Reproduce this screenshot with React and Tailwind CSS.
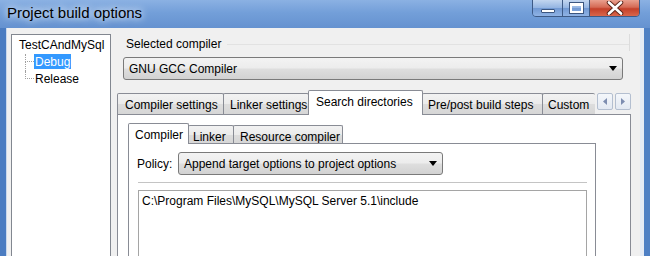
import React from 'react';

const Combo = ({ text, className }) => (
  <div className={`flex shrink-0 items-center h-[23px] border border-[#7a7a7a] rounded-[3px] bg-[linear-gradient(180deg,#f3f3f3_0%,#ececec_48%,#dedede_52%,#d2d2d2_100%)] pl-[5px] pr-[5px] ${className}`}>
    <span className="flex-1 text-[12px] leading-[14px] text-black whitespace-nowrap">{text}</span>
    <svg width="8" height="5" viewBox="0 0 8 5">
      <path d="M0 0h8L4 5z" fill="#000" />
    </svg>
  </div>
);

const Tab = ({ label, active, className }) =>
  active ? (
    <div className={`flex shrink-0 items-start pt-[4px] bg-white border border-b-0 border-[#898c95] rounded-t-[2px] -mb-px relative z-10 text-[12px] leading-[14px] text-black whitespace-nowrap ${className}`}>
      {label}
    </div>
  ) : (
    <div className={`flex shrink-0 items-start pt-[4px] bg-[linear-gradient(180deg,#f2f2f2_0%,#ebebeb_50%,#dddddd_51%,#d6d6d6_100%)] border border-b-0 border-[#898c95] rounded-t-[2px] text-[12px] leading-[14px] text-black whitespace-nowrap overflow-hidden ${className}`}>
      {label}
    </div>
  );

const ScrollBtn = ({ dir }) => (
  <div className="w-[16px] h-[17px] flex items-center justify-center border border-[#b4bfd0] rounded-[2px] bg-[linear-gradient(180deg,#f4f7fb_0%,#e3e9f2_100%)]">
    <svg width="4" height="7" viewBox="0 0 4 7">
      {dir === 'left' ? <path d="M4 0v7L0 3.5z" fill="#7d8db0" /> : <path d="M0 0v7l4-3.5z" fill="#7d8db0" />}
    </svg>
  </div>
);

const App = () => {
  return (
    <div className="w-[650px] h-[256px] overflow-hidden flex flex-col bg-[#5d8bcb] font-['Liberation_Sans',Arial,sans-serif]">
      {/* Title bar */}
      <div className="h-[28px] shrink-0 flex items-start bg-[linear-gradient(180deg,#8bb1e3_0%,#739fd9_45%,#6592d0_100%)]">
        <div className="pl-[7px] pt-[5px] text-[15px] leading-[16px] text-black [text-shadow:0_0_6px_#dce9f8,0_0_10px_#dce9f8]">
          Project build options
        </div>
        <div className="ml-auto mr-[10px] flex h-[18px] -mt-px border border-[#3d5a86] rounded-b-[4px] overflow-hidden">
          <div className="w-[30px] flex items-center justify-center bg-[linear-gradient(180deg,#c2d6f0_0%,#93b4e2_50%,#7199d3_51%,#8fb3e5_100%)] border-r border-[#3d5a86]">
            <div className="mt-[6px] w-[14px] h-[4px] bg-white border border-[#3b5680] rounded-[1px]" />
          </div>
          <div className="w-[27px] flex items-center justify-center bg-[linear-gradient(180deg,#c2d6f0_0%,#93b4e2_50%,#7199d3_51%,#8fb3e5_100%)] border-r border-[#3d5a86]">
            <div className="w-[13px] h-[10px] border-2 border-t-[3px] border-white outline outline-1 outline-[#3b5680]" />
          </div>
          <div className="w-[49px] flex items-center justify-center bg-[linear-gradient(180deg,#e9a08f_0%,#d56a55_45%,#c4402a_55%,#d9664b_100%)]">
            <svg width="18" height="14" viewBox="0 0 18 14">
              <path d="M3 1.5l12 11M15 1.5l-12 11" stroke="#5a2418" strokeWidth="4.5" strokeLinecap="round" />
              <path d="M3 1.5l12 11M15 1.5l-12 11" stroke="#fff" strokeWidth="2.6" strokeLinecap="round" />
            </svg>
          </div>
        </div>
      </div>

      {/* Frame + client */}
      <div className="flex flex-1 min-h-0 overflow-hidden">
        <div className="w-[7px] shrink-0 bg-[#4b7cc1] border-r border-[#c9d8ec]" />
        <div className="w-[633px] shrink-0 bg-[#f0f0f0] flex items-start pl-[4px] pt-[6px]">
          {/* Tree */}
          <div className="w-[100px] h-[240px] shrink-0 bg-white border border-[#828790] pl-[7px] pt-[3px] text-[12px] leading-[14px] text-black">
            <div className="h-[16px] whitespace-nowrap">TestCAndMySql</div>
            <div className="flex h-[17px] ml-[6px]">
              <div className="w-[9px] flex flex-col">
                <div className="h-[8px] border-l border-b border-dotted border-[#a0a0a0]" />
                <div className="flex-1 border-l border-dotted border-[#a0a0a0]" />
              </div>
              <div className="px-[1px] h-[15px] bg-[#3399ff] text-white flex items-center">Debug</div>
            </div>
            <div className="flex h-[17px] ml-[6px]">
              <div className="w-[9px] flex flex-col">
                <div className="h-[8px] border-l border-b border-dotted border-[#a0a0a0]" />
              </div>
              <div className="px-[1px] h-[15px] flex items-center">Release</div>
            </div>
          </div>

          {/* Right side */}
          <div className="ml-[6px] w-[514px] shrink-0 flex flex-col">
            <div className="flex shrink-0 items-center pt-[3px] pl-[9px] mr-[1px] border-r border-[#dcdcdc]">
              <span className="text-[12px] leading-[14px] text-black whitespace-nowrap">Selected compiler</span>
              <div className="flex-1 ml-[6px] border-t border-[#e2e2e2]" />
            </div>
            <Combo text="GNU GCC Compiler" className="mt-[6px] ml-[6px] w-[500px]" />

            {/* Outer tabs */}
            <div className="mt-[10px] h-[24px] shrink-0 flex items-end relative z-10">
              <Tab label="Compiler settings" className="w-[107px] h-[21px] pl-[7px]" />
              <Tab label="Linker settings" className="-ml-px w-[86px] h-[21px] pl-[6px]" />
              <Tab label="Search directories" active className="-ml-px w-[115px] h-[25px] pl-[7px]" />
              <Tab label="Pre/post build steps" className="-ml-px w-[121px] h-[21px] pl-[5px]" />
              <Tab label="Custom" className="-ml-px w-[53px] h-[21px] pl-[5px] border-r-0" />
              <div className="ml-auto mb-[4px] flex gap-[2px]">
                <ScrollBtn dir="left" />
                <ScrollBtn dir="right" />
              </div>
            </div>

            {/* Outer panel */}
            <div className="h-[160px] shrink-0 bg-white border border-[#898c95] pl-[10px] pt-[8px]">
              <div className="h-[20px] flex items-end relative z-10">
                <Tab label="Compiler" active className="w-[61px] h-[21px] pl-[6px] pt-[3px]" />
                <Tab label="Linker" className="-ml-px w-[46px] h-[18px] pl-[4px] pt-[3px]" />
                <Tab label="Resource compiler" className="-ml-px w-[110px] h-[18px] pl-[6px] pt-[3px]" />
              </div>
              <div className="w-[468px] h-[130px] bg-white border border-[#898c95] pt-[8px] pl-[8px]">
                <div className="flex items-center">
                  <span className="w-[41px] text-[12px] leading-[14px] text-black">Policy:</span>
                  <Combo text="Append target options to project options" className="w-[265px]" />
                </div>
                <div className="mt-[7px] ml-[1px] w-[449px] border-t border-[#c4c4c4]" />
                <div className="mt-[7px] ml-[1px] w-[449px] h-[100px] border border-[#a5a5a5] bg-white pl-[3px] pt-[3px] text-[12px] leading-[14px] text-black whitespace-nowrap">
                  C:\Program Files\MySQL\MySQL Server 5.1\include
                </div>
              </div>
            </div>
          </div>
        </div>
        <div className="w-[10px] shrink-0 bg-[#4e80c4] border-l-[4px] border-[#e4ebf5]" />
      </div>
    </div>
  );
};

export default App;
